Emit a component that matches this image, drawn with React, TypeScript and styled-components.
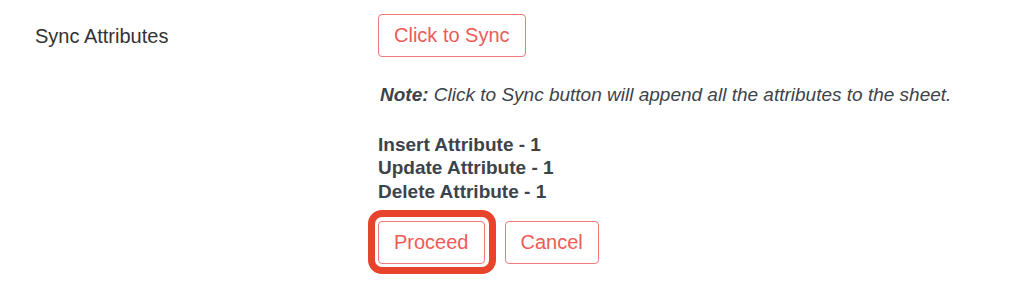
import React from 'react';
import styled, { createGlobalStyle } from 'styled-components';

const GlobalStyle = createGlobalStyle`
  html, body {
    margin: 0;
    padding: 0;
    background: #ffffff;
  }
  body {
    font-family: "Liberation Sans", Arial, Helvetica, sans-serif;
    color: #3c434a;
  }
`;

const Page = styled.div`
  min-height: 100vh;
  box-sizing: border-box;
  padding-bottom: 20px;
`;

const FormRow = styled.div`
  display: grid;
  grid-template-columns: 343px 1fr;
  padding: 14px 0 0 35px;
`;

const RowLabel = styled.div`
  font-size: 20px;
  line-height: 23px;
  color: #333333;
  padding-top: 11px;
`;

const Field = styled.div`
  display: flex;
  flex-direction: column;
  align-items: flex-start;
`;

const OutlineButton = styled.button`
  font-family: "Liberation Sans", Arial, Helvetica, sans-serif;
  font-size: 20px;
  line-height: 23px;
  padding: 9px 15px 9px 15px;
  border: 1px solid #f07a78;
  border-radius: 4px;
  background: #ffffff;
  color: #ef5a57;
  cursor: pointer;
`;

const Note = styled.p`
  margin: 26px 0 0 2px;
  font-size: 19px;
  line-height: 23px;
  font-style: italic;
  color: #3c434a;

  b {
    font-weight: bold;
  }
`;

const Counts = styled.div`
  margin-top: 27px;
  display: flex;
  flex-direction: column;
`;

const CountLine = styled.span`
  font-size: 19px;
  line-height: 23.4px;
  font-weight: bold;
  color: #3c434a;
`;

const Actions = styled.div`
  margin-top: 18px;
  display: flex;
  align-items: flex-start;
  gap: 20px;
`;

const Highlight = styled.span`
  position: relative;
  display: inline-flex;

  &::after {
    content: '';
    position: absolute;
    top: -11px;
    left: -10px;
    right: -11px;
    bottom: -10px;
    border: 7px solid #e8432b;
    border-radius: 14px;
    pointer-events: none;
  }
`;

const counts = [
  { label: 'Insert Attribute', value: 1 },
  { label: 'Update Attribute', value: 1 },
  { label: 'Delete Attribute', value: 1 },
];

export default function App() {
  return (
    <Page>
      <GlobalStyle />
      <FormRow>
        <RowLabel>Sync Attributes</RowLabel>
        <Field>
          <OutlineButton>Click to Sync</OutlineButton>
          <Note>
            <b>Note:</b> Click to Sync button will append all the attributes to the sheet.
          </Note>
          <Counts>
            {counts.map((c) => (
              <CountLine key={c.label}>
                {c.label} - {c.value}
              </CountLine>
            ))}
          </Counts>
          <Actions>
            <Highlight>
              <OutlineButton>Proceed</OutlineButton>
            </Highlight>
            <OutlineButton>Cancel</OutlineButton>
          </Actions>
        </Field>
      </FormRow>
    </Page>
  );
}
